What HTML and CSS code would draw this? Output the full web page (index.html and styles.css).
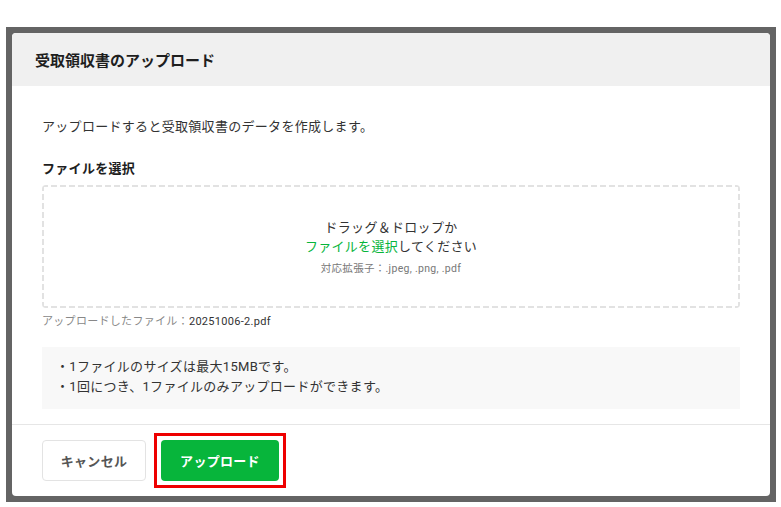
FILE: index.html
```html
<!DOCTYPE html>
<html lang="ja">
<head>
  <meta charset="UTF-8" />
  <meta name="viewport" content="width=device-width, initial-scale=1.0"/>
  <title>受取領収書のアップロード</title>
  <link rel="stylesheet" href="styles.css">
</head>
<body>
  <div class="backdrop">
    <div class="modal">
      <div class="modal-header">
        <h2>受取領収書のアップロード</h2>
      </div>

      <div class="modal-body">
        <p class="description">アップロードすると受取領収書のデータを作成します。</p>

        <p class="field-label">ファイルを選択</p>
        <div class="dropzone">
          <span class="drop-line">ドラッグ＆ドロップか</span>
          <span class="drop-line"><a class="pick-link">ファイルを選択</a>してください</span>
          <span class="drop-hint">対応拡張子：.jpeg, .png, .pdf</span>
        </div>

        <p class="uploaded">アップロードしたファイル：<span class="file-name">20251006-2.pdf</span></p>

        <ul class="notes">
          <li>・1ファイルのサイズは最大15MBです。</li>
          <li>・1回につき、1ファイルのみアップロードができます。</li>
        </ul>
      </div>

      <div class="modal-footer">
        <button class="btn btn-cancel">キャンセル</button>
        <span class="highlight">
          <button class="btn btn-upload">アップロード</button>
        </span>
      </div>
    </div>
  </div>
</body>
</html>
```

FILE: styles.css
```css
body {
  margin: 0;
  padding: 27px 5px 4px 6px;
  background-color: #fff;
  font-family: Roboto, "Noto Sans CJK JP", sans-serif;
  color: #222;
}

.backdrop {
  background-color: #646464;
  padding: 6px;
}

.modal {
  background: #fff;
  border-radius: 4px;
  overflow: hidden;
}

.modal-header {
  background: #f0f0f0;
  height: 53px;
  display: flex;
  align-items: center;
  padding: 0 23px;
}

.modal-header h2 {
  margin: 0;
  font-size: 15px;
  font-weight: bold;
  color: #1e1e1e;
}

.modal-body {
  padding: 31px 30px 15px;
  border-bottom: 1px solid #e6e6e6;
  letter-spacing: 0.3px;
}

.description {
  margin: 0;
  font-size: 13px;
  line-height: 20px;
  color: #333;
}

.field-label {
  margin: 22px 0 6px;
  font-size: 13px;
  line-height: 20px;
  font-weight: bold;
  color: #1e1e1e;
}

.dropzone {
  height: 121px;
  display: flex;
  flex-direction: column;
  align-items: center;
  justify-content: center;
  padding-top: 2px;
  border-radius: 4px;
  background:
    repeating-linear-gradient(90deg, #e2e2e2 0 6px, transparent 6px 9px) top left / 100% 2px no-repeat,
    repeating-linear-gradient(90deg, #e2e2e2 0 6px, transparent 6px 9px) bottom left / 100% 2px no-repeat,
    repeating-linear-gradient(180deg, #e2e2e2 0 6px, transparent 6px 9px) top left / 2px 100% no-repeat,
    repeating-linear-gradient(180deg, #e2e2e2 0 6px, transparent 6px 9px) top right / 2px 100% no-repeat;
}

.drop-line {
  font-size: 13px;
  line-height: 19px;
  color: #333;
}

.pick-link {
  color: #07b53b;
  cursor: pointer;
}

.drop-hint {
  margin-top: 5px;
  font-size: 10.5px;
  line-height: 16px;
  color: #777;
}

.uploaded {
  margin: 6px 0 0;
  font-size: 11px;
  line-height: 16px;
  color: #888;
}

.file-name {
  color: #333;
}

.notes {
  list-style: none;
  margin: 17px 0 0;
  padding: 10px 14px 12px;
  background: #f8f8f8;
  font-size: 13px;
  line-height: 20px;
  color: #333;
}

.modal-footer {
  display: flex;
  align-items: center;
  gap: 8px;
  padding: 8px 30px;
}

.highlight {
  display: flex;
  border: 3px solid #ee0000;
  padding: 4px;
}

.btn {
  font-family: inherit;
  font-size: 13px;
  font-weight: bold;
  letter-spacing: 0.3px;
  height: 41px;
  border-radius: 4px;
  cursor: pointer;
}

.btn-cancel {
  width: 104px;
  background: #fff;
  border: 1px solid #e3e3e3;
  color: #555;
}

.btn-upload {
  width: 118px;
  background: #07b53b;
  border: none;
  color: #fff;
}
```
